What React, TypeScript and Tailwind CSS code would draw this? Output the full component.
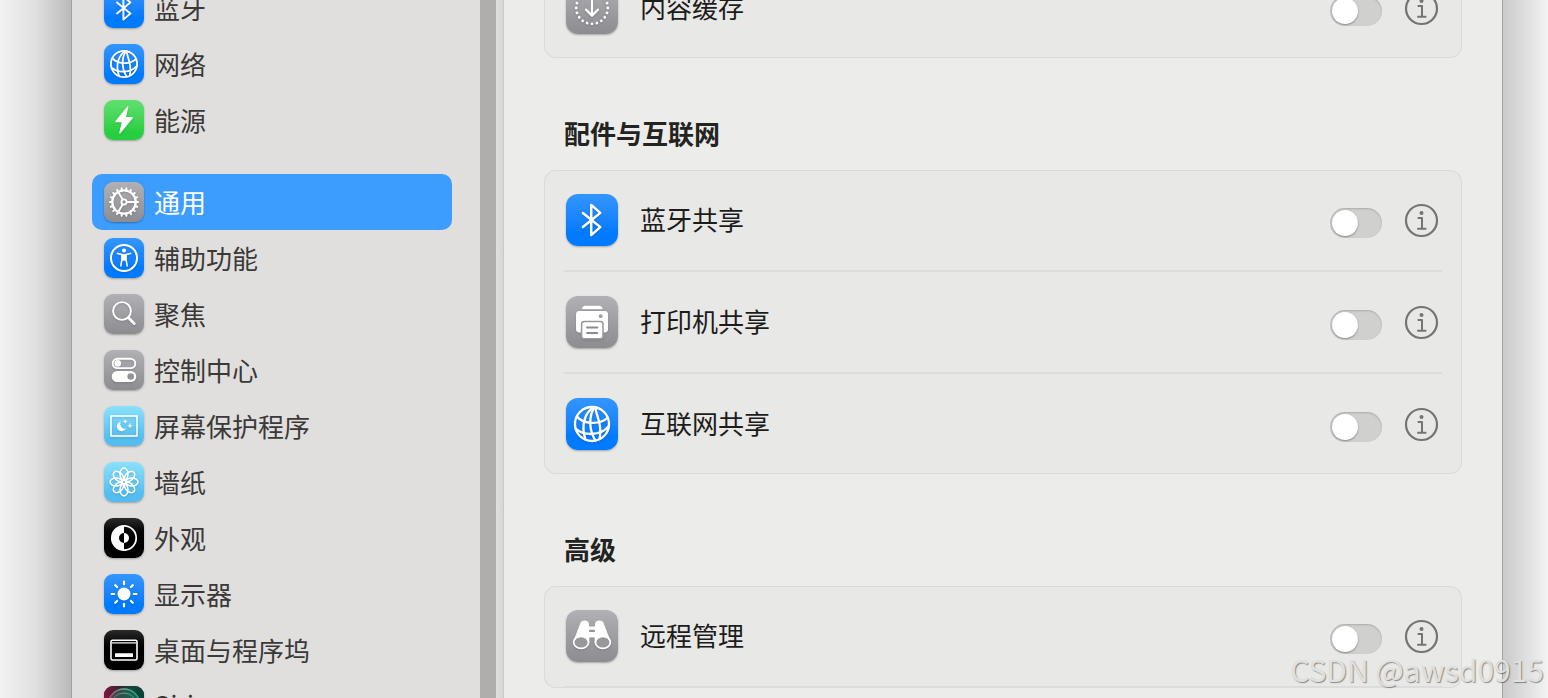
import type { ReactNode } from "react";

const BLUE = "from-[#3395ff] to-[#007aff] to-75%";
const GRAY = "from-[#b1b0b5] to-[#8d8c91]";
const GREEN = "from-[#5fe070] to-[#27cf40] to-80%";
const SKY = "from-[#8ae1fc] to-[#54bdf0] to-80%";
const BLACK = "from-[#2b2b2b] to-[#000000] to-60%";
const SIRI = "from-[#3a2030] to-[#101820]";

function Tile({ tone, large, children }: { tone: string; large?: boolean; children: ReactNode }) {
  return (
    <span
      className={`block shrink-0 overflow-hidden bg-linear-to-b shadow-[0_1px_2px_rgba(0,0,0,0.3)] ${
        large ? "size-13 rounded-xl" : "size-10 rounded-[9px]"
      } ${tone}`}
    >
      {children}
    </span>
  );
}

function Glyph({ box = 40, children }: { box?: number; children: ReactNode }) {
  return (
    <svg
      viewBox={`0 0 ${box} ${box}`}
      className="size-full drop-shadow-[0_1px_1px_rgba(0,0,0,0.15)]"
      fill="none"
      stroke="#fff"
      strokeLinecap="round"
      strokeLinejoin="round"
      aria-hidden="true"
    >
      {children}
    </svg>
  );
}

function BluetoothGlyph() {
  return (
    <Glyph>
      <path d="M13 14.6 26.4 25.5 19.4 31.6V8.4l7 6.1L13 25.4" strokeWidth="1.9" />
    </Glyph>
  );
}

function GlobeGlyph() {
  return (
    <Glyph>
      <g strokeWidth="1.8">
        <circle cx="20" cy="20" r="13.1" />
        <path d="M21.6 7C14.6 10.6 11.2 21.4 15 31.8" />
        <path d="M22.2 7C17.2 13.4 17.6 24.6 22.6 32.6" />
        <path d="M22.8 7.4C22.6 13 28.6 20 25.8 31.2" />
        <path d="M8.6 14.4C13 20 26 21 32 15.2" />
        <path d="M7.6 23.8C14 29.4 27 29 32.6 22" />
      </g>
    </Glyph>
  );
}

function BoltGlyph() {
  return (
    <Glyph>
      <path d="M23.8 6.8 11.8 21.6h6.8L15.8 33 28.4 17.6h-7.2z" fill="#fff" strokeWidth="1.2" />
    </Glyph>
  );
}

function GearGlyph() {
  return (
    <Glyph>
      <circle cx="20" cy="20" r="11.7" strokeWidth="2.3" />
      {Array.from({ length: 18 }, (_, i) => (
        <path key={i} d="M20 7.6V6" strokeWidth="2" transform={`rotate(${i * 20 + 10} 20 20)`} />
      ))}
      <circle cx="20" cy="20" r="2.6" strokeWidth="1.8" />
      <path d="M22.8 20h8.6M18.6 17.6 14.2 10M18.6 22.4 14.2 30" strokeWidth="1.9" />
    </Glyph>
  );
}

function AccessGlyph() {
  return (
    <Glyph>
      <circle cx="20" cy="20" r="13" strokeWidth="2" />
      <circle cx="20" cy="12.6" r="2" fill="#fff" stroke="none" />
      <path
        d="M13.4 15.4 18 16.6V21L16.8 28M26.6 15.4 22 16.6V21L23.2 28"
        strokeWidth="1.5"
      />
      <path d="M17.8 16.4h4.4l-.2 6-1 .4-1-1-1 1-1-.4z" fill="#fff" strokeWidth="0.8" />
    </Glyph>
  );
}

function SearchGlyph() {
  return (
    <Glyph>
      <circle cx="18" cy="17" r="8.9" strokeWidth="1.9" />
      <path d="m24.6 23.8 5.6 5.8" strokeWidth="2.8" />
    </Glyph>
  );
}

function ControlGlyph() {
  return (
    <Glyph>
      <rect x="8.7" y="8.7" width="22.6" height="9.4" rx="4.7" strokeWidth="1.9" />
      <circle cx="13.7" cy="13.4" r="3.3" fill="#fff" stroke="none" />
      <rect x="7.8" y="21" width="24.4" height="11" rx="5.5" fill="#fff" stroke="none" />
      <circle cx="26.7" cy="26.5" r="3.3" fill="#939297" stroke="none" />
    </Glyph>
  );
}

function ScreenSaverGlyph() {
  return (
    <Glyph>
      <rect x="7" y="10" width="26" height="20" strokeWidth="1.6" strokeLinejoin="miter" />
      <path d="M16.6 15.4a5 5 0 1 0 5.6 7.2c-4.2.8-7-3-5.6-7.2z" fill="#fff" stroke="none" />
      <path
        d="m21.2 13 .7 1.8 1.8.7-1.8.7-.7 1.8-.7-1.8-1.8-.7 1.8-.7zM26 16.8l.8 2.1 2.1.8-2.1.8-.8 2.1-.8-2.1-2.1-.8 2.1-.8z"
        fill="#fff"
        stroke="none"
      />
    </Glyph>
  );
}

function FlowerGlyph() {
  return (
    <Glyph>
      {Array.from({ length: 8 }, (_, i) => (
        <ellipse
          key={i}
          cx="20"
          cy="12.1"
          rx="4"
          ry="6"
          strokeWidth="1.5"
          transform={`rotate(${i * 45} 20 20)`}
        />
      ))}
      <circle cx="20" cy="20" r="1.6" strokeWidth="1.2" />
    </Glyph>
  );
}

function AppearanceGlyph() {
  return (
    <Glyph>
      <circle cx="20" cy="20" r="12.2" strokeWidth="1.7" />
      <path d="M20 7.8v7.2a5 5 0 0 0 0 10v7.2a12.2 12.2 0 0 1 0-24.4z" fill="#fff" stroke="none" />
      <path d="M20 15a5 5 0 0 1 0 10z" fill="#fff" stroke="none" />
    </Glyph>
  );
}

function SunGlyph() {
  return (
    <Glyph>
      <circle cx="20" cy="20" r="6.5" fill="#fff" stroke="none" />
      {Array.from({ length: 8 }, (_, i) => (
        <path key={i} d="M20 10.2V7.6" strokeWidth="2.2" transform={`rotate(${i * 45} 20 20)`} />
      ))}
    </Glyph>
  );
}

function DockGlyph() {
  return (
    <Glyph>
      <rect x="7" y="10.2" width="26" height="19.8" rx="1.6" strokeWidth="1.6" />
      <path d="M8 12.9h24" strokeWidth="1.2" strokeLinecap="butt" />
      <rect x="11" y="23.2" width="18" height="3.8" rx="0.6" fill="#fff" stroke="none" />
    </Glyph>
  );
}

function SiriGlyph() {
  return (
    <Glyph>
      <defs>
        <linearGradient id="siri-bg" x1="0" y1="0" x2="1" y2="0">
          <stop offset="0" stopColor="#8a1240" />
          <stop offset="0.4" stopColor="#33252f" />
          <stop offset="0.7" stopColor="#14463c" />
          <stop offset="1" stopColor="#0a3f38" />
        </linearGradient>
        <linearGradient id="siri-ring" x1="0" y1="0" x2="1" y2="0">
          <stop offset="0" stopColor="#b0426c" />
          <stop offset="0.5" stopColor="#5fae92" />
          <stop offset="1" stopColor="#1f9f7f" />
        </linearGradient>
      </defs>
      <rect width="40" height="40" fill="url(#siri-bg)" stroke="none" />
      <circle cx="20" cy="19" r="16" stroke="url(#siri-ring)" strokeWidth="1.4" fill="#2d7a66" fillOpacity="0.5" />
      <circle cx="20" cy="20" r="13" stroke="url(#siri-ring)" strokeWidth="1" />
    </Glyph>
  );
}

function CacheGlyph() {
  return (
    <Glyph box={52}>
      {Array.from({ length: 20 }, (_, i) => (
        <circle
          key={i}
          cx="26"
          cy="10.2"
          r="1.4"
          fill="#fff"
          stroke="none"
          transform={`rotate(${i * 18} 26 26)`}
        />
      ))}
      <path d="M26 17v16.4M20 27.6l6 6 6-6" strokeWidth="2.2" />
    </Glyph>
  );
}

function PrinterGlyph() {
  return (
    <Glyph box={52}>
      <path d="M15.8 13.2c.2-2.2 1.2-3.4 3.2-3.4h14.4c2 0 3 1.2 3.2 3.4z" fill="#fff" stroke="none" />
      <rect x="10" y="15" width="32" height="21.4" rx="3.4" fill="#fff" stroke="none" />
      <circle cx="34.7" cy="20.2" r="1.9" fill="#a09fa4" stroke="none" />
      <rect x="15.6" y="25.4" width="21.4" height="17.4" rx="2.6" fill="#fff" stroke="#98979c" strokeWidth="1.5" />
      <path d="M21 31.5h10.4M21 37h10.4" stroke="#8b8a8f" strokeWidth="1.8" />
    </Glyph>
  );
}

function BinocularsGlyph() {
  return (
    <Glyph box={52}>
      <path d="M14.2 13.6c.6-4.2 8.2-4.2 8.8 0l.4 19.4H7.2c0-3 1.6-5.6 2.6-8z" fill="#fff" stroke="none" />
      <path d="M37.8 13.6c-.6-4.2-8.2-4.2-8.8 0L28.6 33h16.2c0-3-1.6-5.6-2.6-8z" fill="#fff" stroke="none" />
      <path d="M22 16.4h8v3.4h-8zM22 22h8v5.4h-8z" fill="#fff" stroke="none" />
      <ellipse cx="15.1" cy="32.4" rx="7.4" ry="6" fill="#98979c" strokeWidth="1.7" />
      <ellipse cx="36.9" cy="32.4" rx="7.4" ry="6" fill="#98979c" strokeWidth="1.7" />
    </Glyph>
  );
}

type NavItem = { label: string; tone: string; icon: ReactNode; active?: boolean; latin?: boolean };

const groups: NavItem[][] = [
  [
    { label: "蓝牙", tone: BLUE, icon: <BluetoothGlyph /> },
    { label: "网络", tone: BLUE, icon: <GlobeGlyph /> },
    { label: "能源", tone: GREEN, icon: <BoltGlyph /> },
  ],
  [
    { label: "通用", tone: GRAY, icon: <GearGlyph />, active: true },
    { label: "辅助功能", tone: BLUE, icon: <AccessGlyph /> },
    { label: "聚焦", tone: GRAY, icon: <SearchGlyph /> },
    { label: "控制中心", tone: GRAY, icon: <ControlGlyph /> },
    { label: "屏幕保护程序", tone: SKY, icon: <ScreenSaverGlyph /> },
    { label: "墙纸", tone: SKY, icon: <FlowerGlyph /> },
    { label: "外观", tone: BLACK, icon: <AppearanceGlyph /> },
    { label: "显示器", tone: BLUE, icon: <SunGlyph /> },
    { label: "桌面与程序坞", tone: BLACK, icon: <DockGlyph /> },
    { label: "Siri", tone: SIRI, icon: <SiriGlyph />, latin: true },
  ],
];

function Sidebar() {
  return (
    <nav className="-mt-5 flex flex-1 flex-col gap-[26px] pr-7 pl-5">
      {groups.map((items, i) => (
        <ul key={i}>
          {items.map((item) => (
            <li key={item.label}>
              <a
                href="#"
                aria-current={item.active ? "page" : undefined}
                className={`flex h-14 items-center gap-[10px] rounded-[10px] px-3 text-[26px] leading-8 ${
                  item.active ? "bg-[#3c9dff] text-white" : "text-[#3a3938]"
                } ${item.latin ? "font-[Inter,sans-serif]" : ""}`}
              >
                <Tile tone={item.tone}>{item.icon}</Tile>
                {item.label}
              </a>
            </li>
          ))}
        </ul>
      ))}
    </nav>
  );
}

type Service = { id: string; label: string; tone: string; icon: ReactNode };

function ServiceRow({ id, label, tone, icon }: Service) {
  return (
    <div className="flex items-center py-6 pr-[23px] pl-[22px]">
      <Tile tone={tone} large>
        {icon}
      </Tile>
      <label htmlFor={id} className="ml-[22px] flex-1 pb-0.5 text-[26px] leading-8 text-[#1c1c1b]">
        {label}
      </label>
      <input
        id={id}
        type="checkbox"
        role="switch"
        className="mt-1.5 h-[30px] w-13 appearance-none rounded-full bg-[#d0d0ce] p-[2px] shadow-[inset_0_1px_2px_rgba(0,0,0,0.18)] before:block before:size-[26px] before:rounded-full before:bg-white before:shadow-[0_1px_2px_rgba(0,0,0,0.35)] checked:bg-[#007aff] checked:before:ml-auto"
      />
      <button type="button" aria-label={`${label}信息`} className="ml-[22px] size-[35px]">
        <svg viewBox="0 0 35 35" className="size-full" fill="none" stroke="#747472" aria-hidden="true">
          <circle cx="17.5" cy="17.5" r="15.5" strokeWidth="2.2" />
          <circle cx="17.5" cy="9.9" r="2" fill="#747472" stroke="none" />
          <path d="M14.4 15h3.6v10.6M14 25.8h7.6" strokeWidth="2" strokeLinecap="round" strokeLinejoin="round" />
        </svg>
      </button>
    </div>
  );
}

function Card({ rows, more }: { rows: Service[]; more?: boolean }) {
  return (
    <div className="rounded-xl bg-[#e8e8e6] inset-ring inset-ring-[#dadad8]">
      {rows.map((row, i) => (
        <div key={row.id}>
          {i > 0 && <div className="mx-5 h-[2px] bg-[#dcdcda]" />}
          <ServiceRow {...row} />
        </div>
      ))}
      {more && <div className="mx-5 mb-24 h-[2px] bg-[#dcdcda]" />}
    </div>
  );
}

function Heading({ children }: { children: ReactNode }) {
  return <h2 className="px-5 pt-[59px] pb-[21px] text-[26px] leading-8 font-bold text-[#232322]">{children}</h2>;
}

export default function App() {
  return (
    <div className="relative flex h-screen overflow-hidden bg-[#f2f2f2] font-['Noto_Sans_CJK_SC',sans-serif]">
      <div className="w-[71px] shrink-0 bg-linear-to-r from-[#f2f2f2] via-[#e0e0e0] via-50% to-[#bababa]" />
      <div className="flex min-w-0 flex-1 overflow-hidden border-x border-[#a2a2a2] bg-[#ececea]">
        <aside className="flex w-108 shrink-0 overflow-hidden border-r border-[#cbcac8] bg-[#e1dfdd]">
          <Sidebar />
          <div className="w-4 shrink-0 bg-[#afaeac]" />
          <div className="w-[7px] shrink-0 bg-linear-to-r from-[#e1dfdd] to-[#d8d7d5]" />
        </aside>
        <main className="min-w-0 flex-1 overflow-hidden px-10">
          <div className="-mt-[42px]">
            <Card rows={[{ id: "cache", label: "内容缓存", tone: GRAY, icon: <CacheGlyph /> }]} />
            <Heading>配件与互联网</Heading>
            <Card
              rows={[
                { id: "bluetooth", label: "蓝牙共享", tone: BLUE, icon: <BluetoothGlyph /> },
                { id: "printer", label: "打印机共享", tone: GRAY, icon: <PrinterGlyph /> },
                { id: "internet", label: "互联网共享", tone: BLUE, icon: <GlobeGlyph /> },
              ]}
            />
            <Heading>高级</Heading>
            <Card rows={[{ id: "remote", label: "远程管理", tone: GRAY, icon: <BinocularsGlyph /> }]} more />
          </div>
        </main>
      </div>
      <div className="w-[45px] shrink-0 bg-linear-to-r from-[#cacaca] to-[#f3f3f3]" />
      <p className="pointer-events-none absolute right-1 bottom-[9px] text-[30px] leading-10 font-normal text-[#e0e0de] [text-shadow:1px_1px_1px_rgba(0,0,0,0.4)]">
        CSDN @awsd0915
      </p>
    </div>
  );
}
